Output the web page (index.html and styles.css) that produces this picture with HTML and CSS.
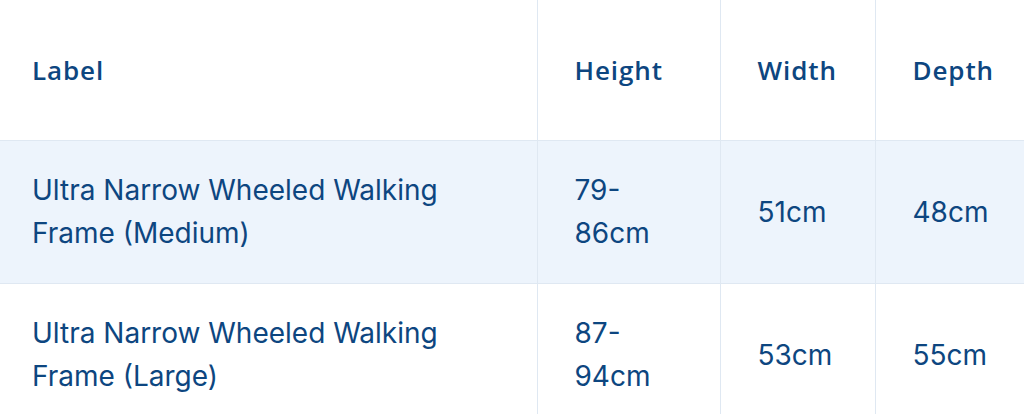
FILE: index.html
```html
<!DOCTYPE html>
<html lang="en">
<head>
<meta charset="utf-8">
<title>Sizes</title>
<link rel="stylesheet" href="styles.css">
</head>
<body>
<table class="spec-table">
  <colgroup>
    <col class="c-label">
    <col class="c-height">
    <col class="c-width">
    <col class="c-depth">
  </colgroup>
  <thead>
    <tr class="head-row">
      <th class="cell first">Label</th>
      <th class="cell">Height</th>
      <th class="cell">Width</th>
      <th class="cell">Depth</th>
    </tr>
  </thead>
  <tbody>
    <tr class="row shaded">
      <td class="cell first">Ultra Narrow Wheeled Walking Frame (Medium)</td>
      <td class="cell">79-86cm</td>
      <td class="cell">51cm</td>
      <td class="cell">48cm</td>
    </tr>
    <tr class="row">
      <td class="cell first">Ultra Narrow Wheeled Walking Frame (Large)</td>
      <td class="cell">87-94cm</td>
      <td class="cell">53cm</td>
      <td class="cell">55cm</td>
    </tr>
  </tbody>
</table>
</body>
</html>
```

FILE: styles.css
```css
html, body {
  margin: 0;
  padding: 0;
  background: #ffffff;
  overflow: hidden;
}

.spec-table {
  border-collapse: collapse;
  table-layout: fixed;
  width: 1062px;
  color: #0d4680;
  font-family: Inter, "Noto Sans", sans-serif;
}

.c-label { width: 537px; }
.c-height { width: 183px; }
.c-width { width: 155px; }
.c-depth { width: 187px; }

.cell {
  border-left: 1px solid #dfe8f2;
  border-bottom: 1.5px solid #dfe8f2;
  padding: 0 37px 0 37px;
  text-align: left;
  vertical-align: middle;
  word-break: normal;
}

.cell.first {
  border-left: none;
  padding-left: 32px;
  padding-right: 80px;
}

.head-row .cell {
  height: 140px;
  font-family: "Open Sans", sans-serif;
  font-weight: 600;
  font-size: 26px;
  letter-spacing: 0.9px;
}

.row .cell {
  height: 142px;
  font-size: 28px;
  font-weight: 400;
  line-height: 43px;
}

.shaded {
  background: #edf4fc;
}
```
